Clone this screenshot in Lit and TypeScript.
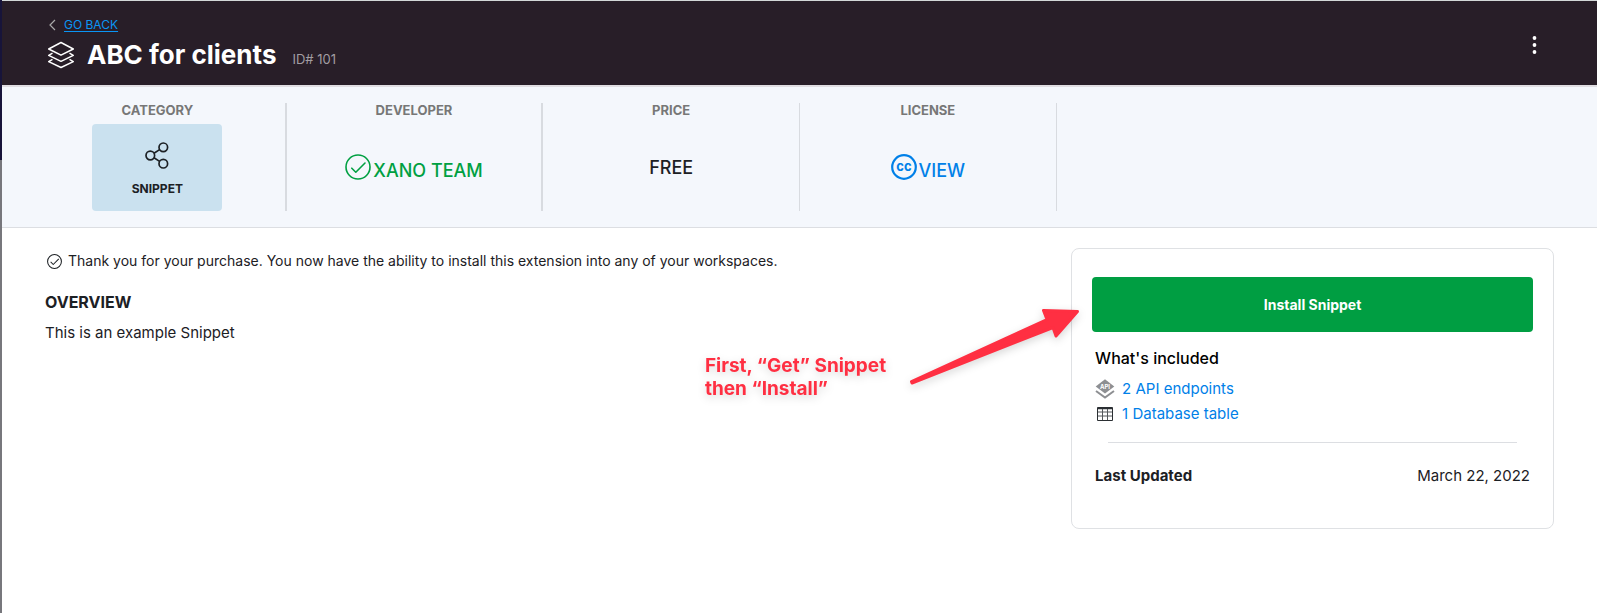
import { LitElement, html, css } from "lit";
import { customElement, property } from "lit/decorators.js";

const checkCircle = (size: number, stroke: number) => html`
  <svg width=${size} height=${size} viewBox="0 0 26 26" fill="none" stroke="currentColor" stroke-width=${stroke} stroke-linecap="round" stroke-linejoin="round" aria-hidden="true">
    <circle cx="13" cy="13" r="12"></circle>
    <path d="M6.8 14.2 10.8 18.2 20 9"></path>
  </svg>`;

@customElement("info-column")
class InfoColumn extends LitElement {
  @property() label = "";

  static styles = css`
    :host {
      display: flex;
      flex-direction: column;
      align-items: center;
      box-sizing: border-box;
      border-right: 1px solid #d8dbe0;
    }
    .label {
      margin: 0;
      font-size: 13px;
      line-height: 15px;
      font-weight: 700;
      color: #777;
    }
    .value {
      flex: 1;
      display: flex;
      align-items: center;
      justify-content: center;
      margin-top: 6px;
    }
  `;

  render() {
    return html`
      <h2 class="label">${this.label}</h2>
      <div class="value"><slot></slot></div>
    `;
  }
}

@customElement("app-root")
class AppRoot extends LitElement {
  static styles = css`
    :host {
      display: block;
      font-family: Inter, "Liberation Sans", sans-serif;
      font-size: 15px;
      line-height: 20px;
      color: #1c2024;
    }
    * {
      box-sizing: border-box;
    }
    svg {
      display: block;
      flex: none;
    }
    a {
      color: #0080e8;
      text-decoration: none;
    }
    .shell {
      display: grid;
      grid-template-columns: 2px 1fr;
      min-height: 100vh;
    }
    .rail {
      background: linear-gradient(#17143a 160px, #77777c 160px);
    }
    .page {
      min-width: 0;
      background: #fff;
    }
    .header {
      display: flex;
      align-items: center;
      justify-content: space-between;
      height: 87px;
      padding: 4px 52px 0 45px;
      background: #281e28;
      border-top: 1px solid #d3d8d8;
      border-bottom: 2px solid #e0dde2;
    }
    .back {
      display: flex;
      align-items: center;
      gap: 8px;
      padding-left: 2px;
      color: #aaa;
      font-size: 12px;
      line-height: 16px;
    }
    .back a {
      color: #0a95f5;
      text-decoration: underline;
      text-underline-offset: 2px;
    }
    .heading {
      display: flex;
      align-items: center;
      margin-top: 4px;
      color: #fff;
    }
    .heading h1 {
      margin: 0 16px 0 12px;
      font-size: 26px;
      line-height: 36px;
      font-weight: 700;
    }
    .id {
      padding-top: 8px;
      font-size: 13px;
      line-height: 16px;
      color: #a29da2;
    }
    .menu {
      padding: 8px;
      border: 0;
      background: none;
      color: #fff;
      cursor: pointer;
    }
    .info {
      display: grid;
      grid-template-columns: repeat(6, 1fr);
      padding: 16px 27px 16px 28px;
      background: #f4f7fc;
      border-bottom: 1px solid #dcdee2;
    }
    .thick {
      border-right-width: 2px;
    }
    .tile {
      display: flex;
      flex-direction: column;
      align-items: center;
      gap: 12px;
      width: 130px;
      padding: 18px 0 14px;
      border-radius: 4px;
      background: #cae1ef;
      font-size: 12px;
      line-height: 16px;
      font-weight: 700;
    }
    .fact {
      display: flex;
      align-items: flex-start;
      gap: 2px;
      font-size: 18px;
      line-height: 24px;
      font-weight: 500;
    }
    .fact svg {
      margin-top: 1px;
    }
    .fact span {
      padding-top: 6px;
    }
    .green {
      color: #00a042;
    }
    .content {
      display: grid;
      grid-template-columns: 17fr 8fr;
      align-items: start;
      padding: 20px 43px;
    }
    .thanks {
      display: flex;
      align-items: center;
      gap: 6px;
      margin: 3px 0 0;
      padding-left: 2px;
      font-size: 14px;
    }
    .overview {
      margin: 21px 0 0;
      font-size: 16px;
      line-height: 20px;
      font-weight: 700;
    }
    .text {
      margin: 11px 0 0;
    }
    .card {
      position: relative;
      padding: 28px 20px 42px;
      border: 1px solid #dfe1e4;
      border-radius: 8px;
    }
    .install {
      display: block;
      width: 100%;
      padding: 17px;
      border: 0;
      border-radius: 4px;
      background: #009e42;
      color: #fff;
      font: inherit;
      font-size: 14px;
      line-height: 21px;
      font-weight: 700;
      cursor: pointer;
    }
    .included {
      margin: 16px 3px 0;
      font-size: 16px;
      line-height: 20px;
      font-weight: 500;
      color: #000;
    }
    .items {
      display: grid;
      gap: 5px;
      margin: 11px 3px 0;
      padding: 0;
      list-style: none;
    }
    .items li {
      display: grid;
      grid-template-columns: 20px auto;
      align-items: center;
      justify-items: center;
      justify-content: start;
      column-gap: 7px;
    }
    .items a {
      justify-self: start;
    }
    .rule {
      height: 1px;
      margin: 18px 16px 23px;
      border: 0;
      background: #dcdee2;
    }
    .updated {
      display: flex;
      justify-content: space-between;
      margin: 0 3px;
    }
    .updated dt {
      font-weight: 700;
    }
    .updated dd {
      margin: 0;
    }
    .note {
      position: absolute;
      top: 53px;
      right: calc(100% - 8px);
      display: flex;
      align-items: flex-start;
      gap: 18px;
      color: #ff2f42;
      pointer-events: none;
      filter: drop-shadow(0 3px 4px rgba(0, 0, 0, 0.16));
    }
    .note p {
      margin: 52px 0 0;
      font-size: 19px;
      line-height: 23px;
      font-weight: 700;
      white-space: nowrap;
    }
  `;

  render() {
    return html`
      <div class="shell">
        <div class="rail"></div>
        <div class="page">
          <header class="header">
            <div>
              <nav class="back">
                <svg width="7" height="12" viewBox="0 0 7 12" fill="none" stroke="currentColor" stroke-width="1.2" aria-hidden="true"><path d="M6 1 1 6 6 11"></path></svg>
                <a href="#">GO BACK</a>
              </nav>
              <div class="heading">
                <svg width="28" height="28" viewBox="0 0 28 28" fill="none" stroke="currentColor" stroke-width="1.5" stroke-linejoin="round" aria-hidden="true">
                  <path d="M14 1.5 26.3 8 14 14.2 1.7 8Z"></path>
                  <path d="M5.5 12.2 1.7 14.3 14 20.3 26.3 14.3 22.5 12.2"></path>
                  <path d="M5.5 18.3 1.7 20.6 14 26.5 26.3 20.6 22.5 18.3"></path>
                </svg>
                <h1>ABC for clients</h1>
                <span class="id">ID# 101</span>
              </div>
            </div>
            <button class="menu" aria-label="More actions">
              <svg width="5" height="20" viewBox="0 0 5 20" fill="currentColor" aria-hidden="true">
                <circle cx="2.5" cy="3" r="1.9"></circle><circle cx="2.5" cy="10" r="1.9"></circle><circle cx="2.5" cy="17" r="1.9"></circle>
              </svg>
            </button>
          </header>

          <section class="info">
            <info-column class="thick" label="CATEGORY">
              <div class="tile">
                <svg width="24" height="27" viewBox="0 0 24 27" fill="none" stroke="currentColor" stroke-width="1.7" aria-hidden="true">
                  <circle cx="5.3" cy="13.5" r="4.3"></circle>
                  <circle cx="18.3" cy="5.3" r="4.3"></circle>
                  <circle cx="18.3" cy="21.7" r="4.3"></circle>
                  <path d="M9 11.2 14.6 7.6M9 15.8 14.6 19.4"></path>
                </svg>
                SNIPPET
              </div>
            </info-column>
            <info-column class="thick" label="DEVELOPER">
              <div class="fact green">${checkCircle(26, 1.6)}<span>XANO TEAM</span></div>
            </info-column>
            <info-column label="PRICE"><div class="fact">FREE</div></info-column>
            <info-column label="LICENSE">
              <a class="fact" href="#">
                <svg width="26" height="26" viewBox="0 0 26 26" aria-hidden="true">
                  <circle cx="13" cy="13" r="11.8" fill="none" stroke="currentColor" stroke-width="2.2"></circle>
                  <text x="13" y="17" text-anchor="middle" font-size="13" font-weight="700" fill="currentColor">cc</text>
                </svg>
                <span>VIEW</span>
              </a>
            </info-column>
          </section>

          <main class="content">
            <section>
              <p class="thanks">${checkCircle(15, 1.8)}<span>Thank you for your purchase. You now have the ability to install this extension into any of your workspaces.</span></p>
              <h2 class="overview">OVERVIEW</h2>
              <p class="text">This is an example Snippet</p>
            </section>

            <aside class="card">
              <button class="install">Install Snippet</button>
              <h3 class="included">What's included</h3>
              <ul class="items">
                <li>
                  <svg width="20" height="20" viewBox="0 0 20 20" aria-hidden="true">
                    <path d="M10 0.3 19.3 7.4 10 14.6 0.7 7.4Z" fill="#8d8f92"></path>
                    <path d="M1 12 10 18.6 19 12" fill="none" stroke="#8d8f92" stroke-width="2"></path>
                    <text x="10" y="9.6" text-anchor="middle" font-size="6" font-weight="700" fill="#fff">API</text>
                  </svg>
                  <a href="#">2 API endpoints</a>
                </li>
                <li>
                  <svg width="16" height="14" viewBox="0 0 16 14" fill="none" stroke="#2b2f33" aria-hidden="true">
                    <path d="M.5 .5H15.5V13.5H.5Z"></path>
                    <path d="M.5 1.5H15.5" stroke-width="1.5"></path>
                    <path d="M1 5H15M1 9H15M5.5 2V13M10.5 2V13" stroke="#54585c"></path>
                  </svg>
                  <a href="#">1 Database table</a>
                </li>
              </ul>
              <hr class="rule" />
              <dl class="updated"><dt>Last Updated</dt><dd>March 22, 2022</dd></dl>

              <div class="note">
                <p>First, “Get” Snippet<br />then “Install”</p>
                <svg width="176" height="84" viewBox="0 0 176 84" fill="currentColor" stroke="currentColor" stroke-width="3" stroke-linejoin="round" aria-hidden="true">
                  <path d="M7.5 79.5 143 17.5 139.5 8.5 173.5 9.5 152 34 149 25.5 8 81Z"></path>
                </svg>
              </div>
            </aside>
          </main>
        </div>
      </div>
    `;
  }
}
